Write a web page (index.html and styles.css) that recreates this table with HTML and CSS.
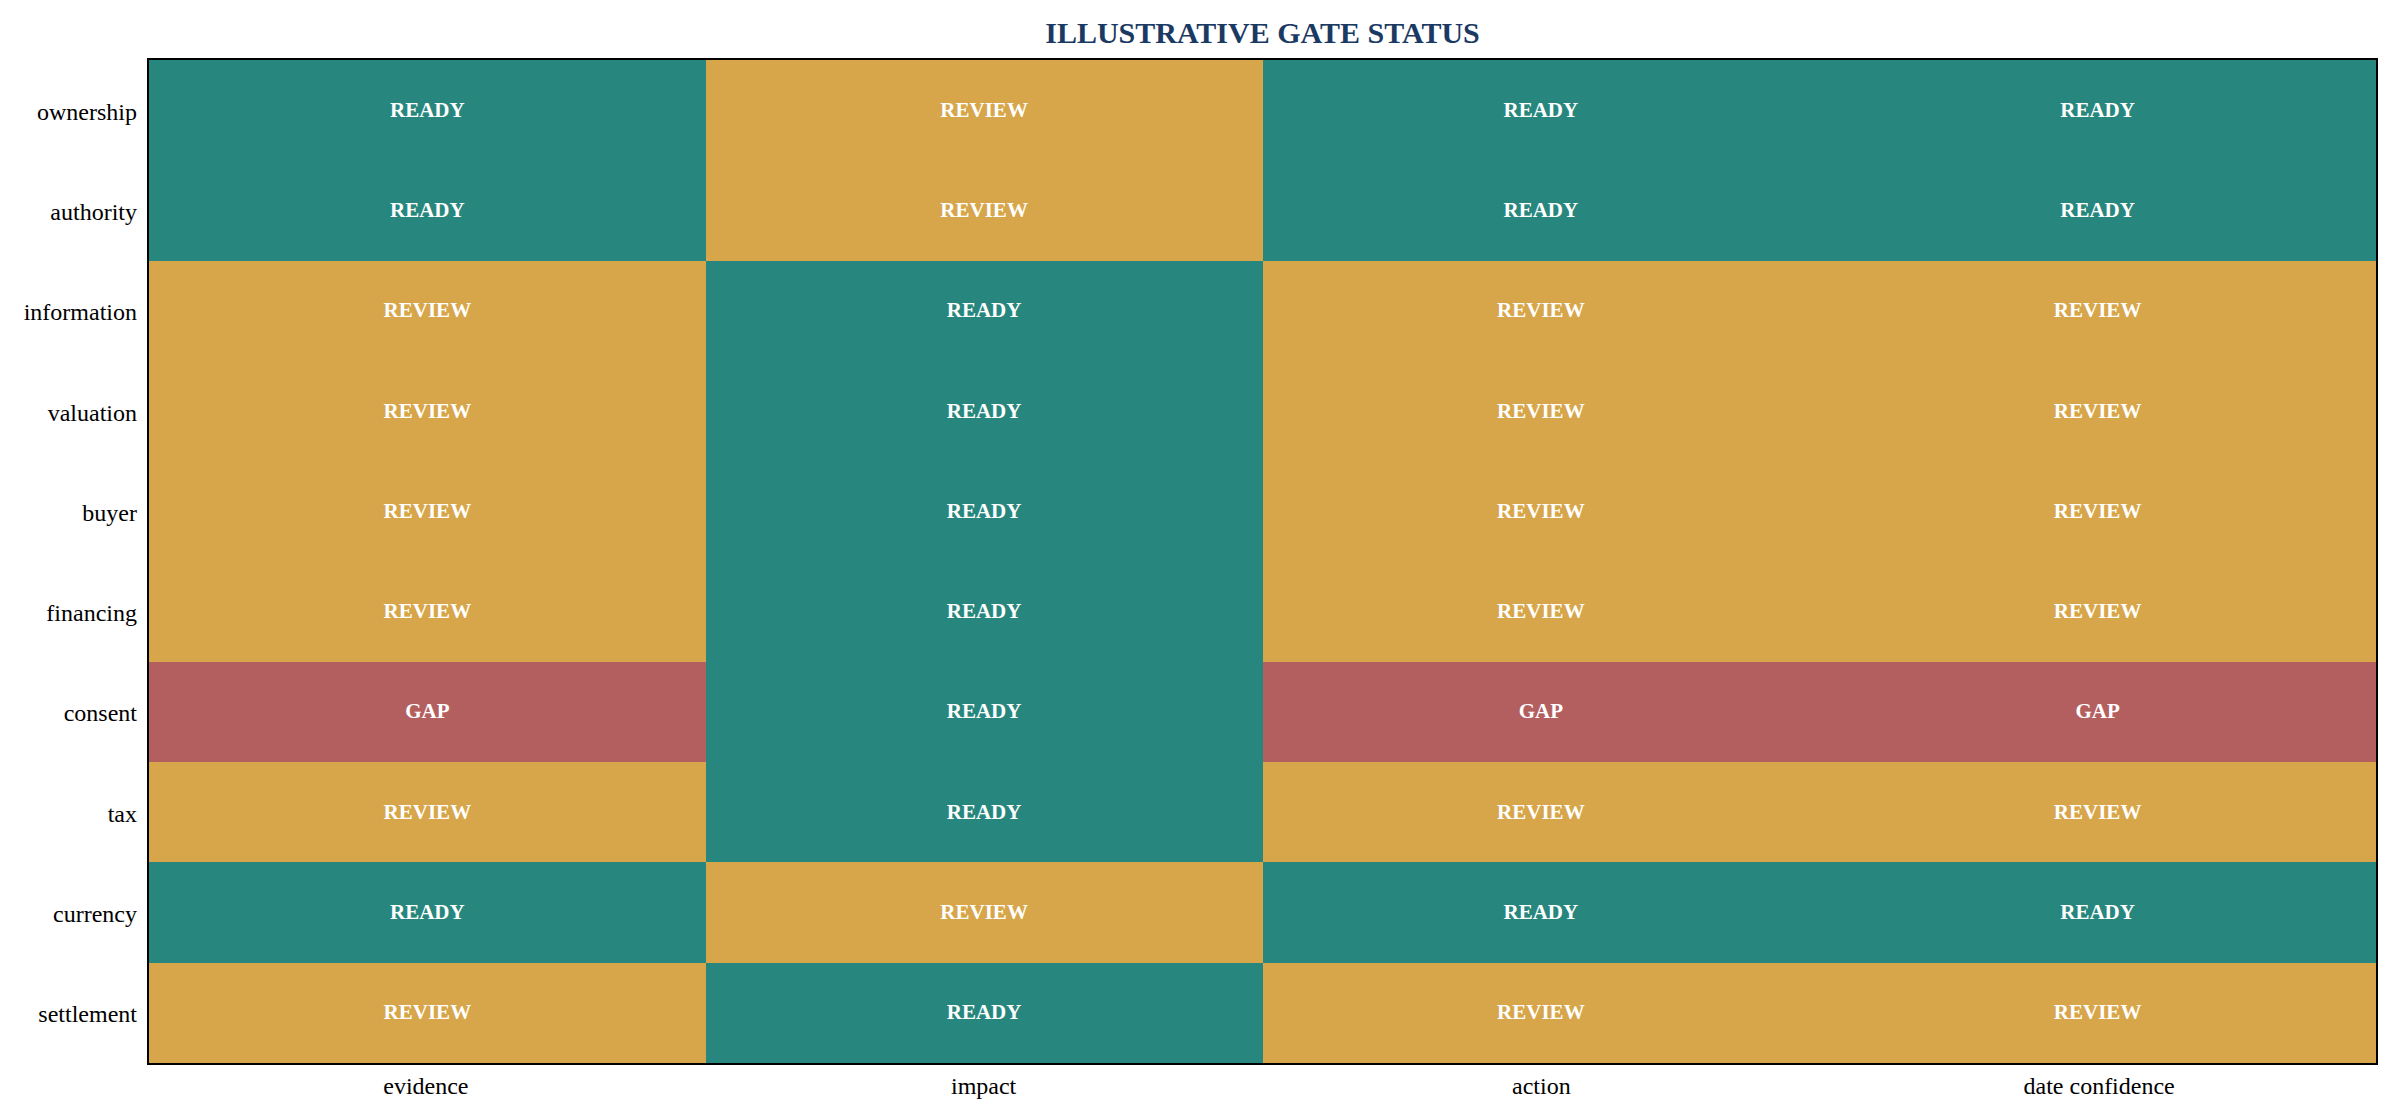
FILE: index.html
```html
<!DOCTYPE html>
<html>
<head>
<meta charset="utf-8">
<link rel="stylesheet" href="styles.css">
</head>
<body>
<div class="figure">
  <div class="title-row">
    <div class="spacer"></div>
    <h1 class="title">ILLUSTRATIVE GATE STATUS</h1>
  </div>
  <div class="chart-row">
    <div class="y-labels">
      <div class="y-label">ownership</div>
      <div class="y-label">authority</div>
      <div class="y-label">information</div>
      <div class="y-label">valuation</div>
      <div class="y-label">buyer</div>
      <div class="y-label">financing</div>
      <div class="y-label">consent</div>
      <div class="y-label">tax</div>
      <div class="y-label">currency</div>
      <div class="y-label">settlement</div>
    </div>
    <div class="plot">
      <div class="cell ready">READY</div><div class="cell review">REVIEW</div><div class="cell ready">READY</div><div class="cell ready">READY</div>
      <div class="cell ready">READY</div><div class="cell review">REVIEW</div><div class="cell ready">READY</div><div class="cell ready">READY</div>
      <div class="cell review">REVIEW</div><div class="cell ready">READY</div><div class="cell review">REVIEW</div><div class="cell review">REVIEW</div>
      <div class="cell review">REVIEW</div><div class="cell ready">READY</div><div class="cell review">REVIEW</div><div class="cell review">REVIEW</div>
      <div class="cell review">REVIEW</div><div class="cell ready">READY</div><div class="cell review">REVIEW</div><div class="cell review">REVIEW</div>
      <div class="cell review">REVIEW</div><div class="cell ready">READY</div><div class="cell review">REVIEW</div><div class="cell review">REVIEW</div>
      <div class="cell gap">GAP</div><div class="cell ready">READY</div><div class="cell gap">GAP</div><div class="cell gap">GAP</div>
      <div class="cell review">REVIEW</div><div class="cell ready">READY</div><div class="cell review">REVIEW</div><div class="cell review">REVIEW</div>
      <div class="cell ready">READY</div><div class="cell review">REVIEW</div><div class="cell ready">READY</div><div class="cell ready">READY</div>
      <div class="cell review">REVIEW</div><div class="cell ready">READY</div><div class="cell review">REVIEW</div><div class="cell review">REVIEW</div>
    </div>
  </div>
  <div class="x-row">
    <div class="spacer"></div>
    <div class="x-labels">
      <div class="x-label">evidence</div>
      <div class="x-label">impact</div>
      <div class="x-label">action</div>
      <div class="x-label">date confidence</div>
    </div>
  </div>
</div>
</body>
</html>
```

FILE: styles.css
```css
html, body {
  margin: 0;
  padding: 0;
  background: #ffffff;
}

body {
  font-family: "Liberation Serif", "Times New Roman", serif;
  color: #000000;
  width: 2400px;
  height: 1120px;
  overflow: hidden;
}

.figure {
  display: flex;
  flex-direction: column;
}

.title-row,
.chart-row,
.x-row {
  display: flex;
}

.spacer {
  width: 147px;
  flex: none;
}

.title {
  margin: 0;
  width: 2231px;
  height: 58px;
  box-sizing: border-box;
  padding-top: 16px;
  text-align: center;
  font-size: 30px;
  line-height: 34px;
  font-weight: bold;
  color: #1b3a63;
}

.y-labels {
  width: 147px;
  flex: none;
  display: grid;
  grid-template-rows: repeat(10, 1fr);
  padding: 2px 0;
  box-sizing: border-box;
}

.y-label {
  display: flex;
  align-items: center;
  justify-content: flex-end;
  padding-right: 10px;
  padding-top: 4px;
  font-size: 24px;
}

.plot {
  width: 2231px;
  height: 1007px;
  box-sizing: border-box;
  border: 2px solid #000000;
  display: grid;
  grid-template-columns: repeat(4, 1fr);
  grid-template-rows: repeat(10, 1fr);
}

.cell {
  display: flex;
  align-items: center;
  justify-content: center;
  color: #ffffff;
  font-weight: bold;
  font-size: 21px;
}

.ready {
  background: #27877e;
}

.review {
  background: #d7a64a;
}

.gap {
  background: #b35e5f;
}

.x-labels {
  width: 2231px;
  display: grid;
  grid-template-columns: repeat(4, 1fr);
  padding-top: 8px;
}

.x-label {
  text-align: center;
  font-size: 24px;
}
```
